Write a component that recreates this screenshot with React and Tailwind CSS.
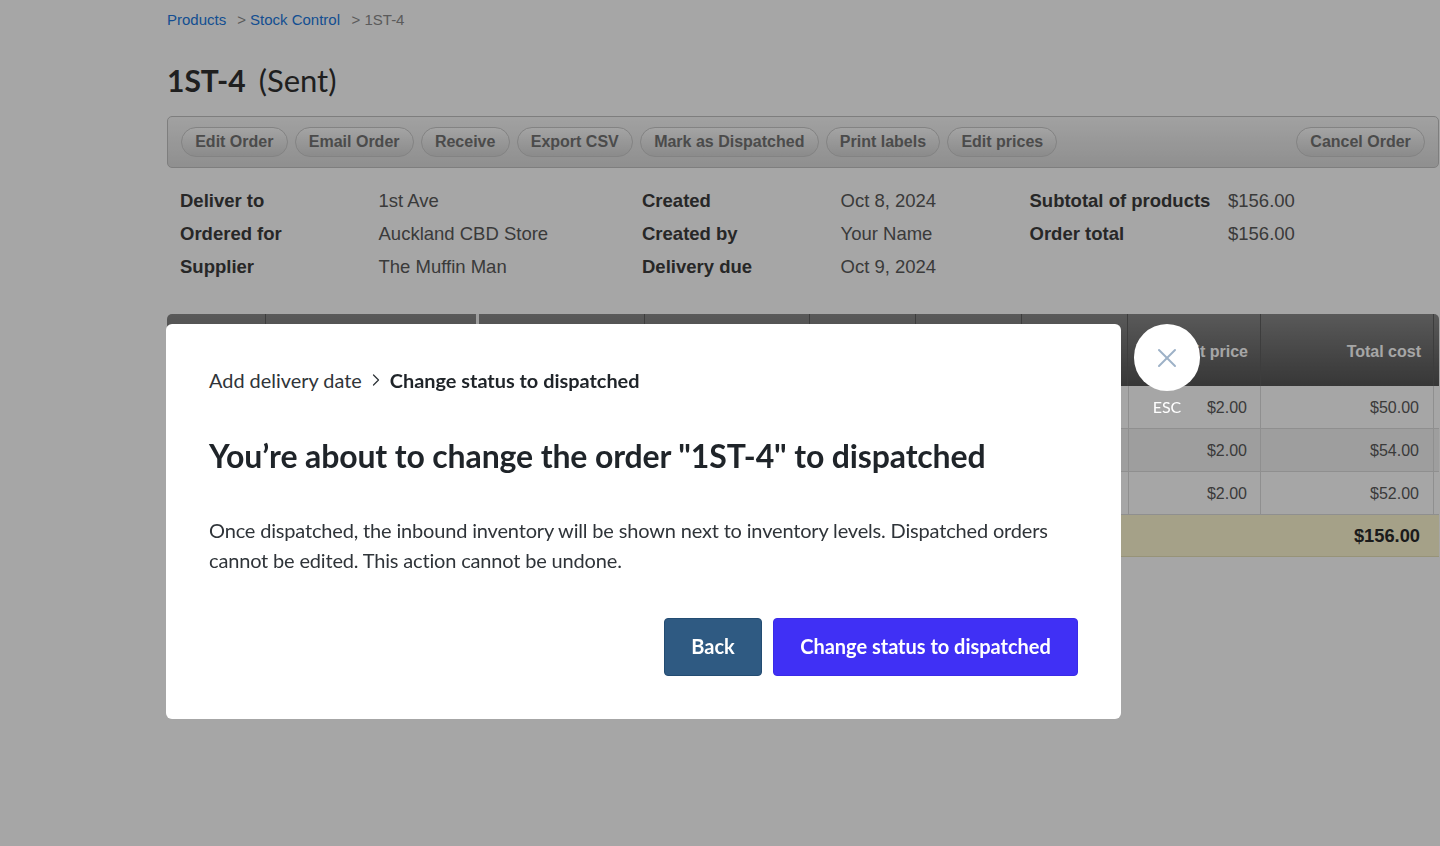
import { X, ChevronRight } from 'lucide-react';

const actions = ['Edit Order', 'Email Order', 'Receive', 'Export CSV', 'Mark as Dispatched', 'Print labels', 'Edit prices'];

const details = [
  ['Deliver to', '1st Ave', 'Created', 'Oct 8, 2024', 'Subtotal of products', '$156.00'],
  ['Ordered for', 'Auckland CBD Store', 'Created by', 'Your Name', 'Order total', '$156.00'],
  ['Supplier', 'The Muffin Man', 'Delivery due', 'Oct 9, 2024', '', ''],
];

const rows = [
  ['$2.00', '$50.00'],
  ['$2.00', '$54.00'],
  ['$2.00', '$52.00'],
];

const columns = 'grid grid-cols-[99px_213px_166px_165px_106px_106px_106px_133px_173px_5px]';

function ActionButton({ label }) {
  return (
    <button className="h-[30px] rounded-full border border-[#c9c9c9] bg-gradient-to-b from-[#fcfcfc] to-[#d6d6d6] px-[13.2px] text-[16px] font-bold text-[#747474]">
      {label}
    </button>
  );
}

function OrderTable() {
  return (
    <div className="mt-[31px] w-[1272px] overflow-hidden rounded-t-[5px] text-[16px] text-[#5a5a5a]">
      <div className={`${columns} h-[72px] bg-gradient-to-b from-[#8a8a8a] to-[#555555] text-[16px] font-bold text-white`}>
        <div className="border-r border-[#5f5f5f]" />
        <div className="border-r-[3px] border-[#f2f2f2]" />
        <div className="border-r border-[#5f5f5f]" />
        <div className="border-r border-[#5f5f5f]" />
        <div className="border-r border-[#5f5f5f]" />
        <div className="border-r border-[#5f5f5f]" />
        <div className="border-r border-[#5f5f5f]" />
        <div className="flex items-center justify-end border-r border-[#5f5f5f] pr-3 pt-[4px]">Unit price</div>
        <div className="flex items-center justify-end border-r border-[#5f5f5f] pr-3 pt-[4px]">Total cost</div>
        <div />
      </div>
      {rows.map((row, i) => (
        <div key={row[1]} className={`${columns} h-[43px] border-b border-[#dcdcdc] ${i === 1 ? 'bg-[#f3f3f3]' : 'bg-white'}`}>
          <div className="col-span-7" />
          <div className="flex items-center justify-end border-x border-[#dcdcdc] pr-[13px] pt-[2px]">{row[0]}</div>
          <div className="flex items-center justify-end border-r border-[#dcdcdc] pr-[14px] pt-[2px]">{row[1]}</div>
          <div />
        </div>
      ))}
      <div className="flex h-[42px] items-center justify-end border-b border-[#e8e2b8] bg-[#fdf7d2] pr-[19px] text-[18.3px] font-bold text-[#2a2a2a]">
        $156.00
      </div>
    </div>
  );
}

function DispatchModal() {
  return (
    <div className="fixed inset-0 flex items-start bg-black/35 pl-[166px] pt-[324px] font-['Lato',sans-serif]">
      <div className="h-[395px] w-[955px] rounded-[6px] bg-white px-[43px] pt-[43px] text-[#1f2429]">
        <div className="flex h-[26px] items-center text-[19.9px] leading-[26px]">
          <span className="text-[#2f3439]">Add delivery date</span>
          <ChevronRight className="mx-[4px] size-[20px] text-[#2f3439]" strokeWidth={1.5} />
          <span className="font-bold">Change status to dispatched</span>
        </div>
        <h2 className="mt-[43px] text-[32px] font-bold leading-[40px] tracking-[-0.13px]">You’re about to change the order "1ST-4" to dispatched</h2>
        <p className="mt-[39px] text-[20px] leading-[30px] tracking-[-0.17px] text-[#2f3439]">
          Once dispatched, the inbound inventory will be shown next to inventory levels. Dispatched orders cannot be edited. This action cannot be undone.
        </p>
        <div className="mt-[43px] flex justify-end gap-[11px]">
          <button className="h-[58px] w-[98px] rounded-[4px] border border-[#234c72] bg-[#2f5a82] pb-[2px] text-[20px] font-bold text-white">Back</button>
          <button className="h-[58px] w-[305px] rounded-[4px] border border-[#3a2be6] bg-[#4030f5] pb-[2px] text-[20px] font-bold tracking-[-0.02px] text-white">Change status to dispatched</button>
        </div>
      </div>
      <div className="ml-[13px] flex w-[66px] flex-col items-center">
        <button className="flex h-[67px] w-[66px] items-center justify-center rounded-full bg-white text-[#9db1c7]">
          <X className="size-[32px]" strokeWidth={1.5} />
        </button>
        <span className="mt-[6px] text-[16px] leading-[20px] text-white">ESC</span>
      </div>
    </div>
  );
}

export default function App() {
  return (
    <div className="relative h-[846px] overflow-hidden bg-white pl-[167px] font-['Liberation_Sans',sans-serif]">
      <nav className="flex h-[40px] items-center text-[15px] text-[#8c8c8c]">
        <a className="text-[#2179e0]">Products</a>
        <span className="ml-[11px]">&gt;</span>
        <a className="ml-[4px] text-[#2179e0]">Stock Control</a>
        <span className="ml-[11.5px]">&gt; 1ST-4</span>
      </nav>
      <h1 className="mt-[21px] flex h-[38px] items-center font-['Lato',sans-serif] text-[30px] leading-[38px] text-[#303030]">
        <span className="font-bold">1ST-4</span>
        <span className="ml-[13px] text-[31px]">(Sent)</span>
      </h1>
      <div className="mt-[17px] flex h-[52px] w-[1272px] items-center gap-[7px] rounded-[5px] border border-[#c2c2c2] bg-gradient-to-b from-[#f8f8f8] to-[#dcdcdc] pl-[13px] pr-[13px]">
        {actions.map((label) => (
          <ActionButton key={label} label={label} />
        ))}
        <div className="ml-auto">
          <ActionButton label="Cancel Order" />
        </div>
      </div>
      <div className="ml-[13px] mt-[16px] grid grid-cols-[198.5px_263.5px_198.5px_189px_198.5px_1fr] text-[18.5px] leading-[33px] text-[#5a5a5a]">
        {details.map((row) =>
          row.map((cell, i) => (
            <div key={`${row[0]}-${i}`} className={i % 2 === 0 ? 'font-bold text-[#3c3c3c]' : ''}>
              {cell}
            </div>
          ))
        )}
      </div>
      <OrderTable />
      <DispatchModal />
    </div>
  );
}
